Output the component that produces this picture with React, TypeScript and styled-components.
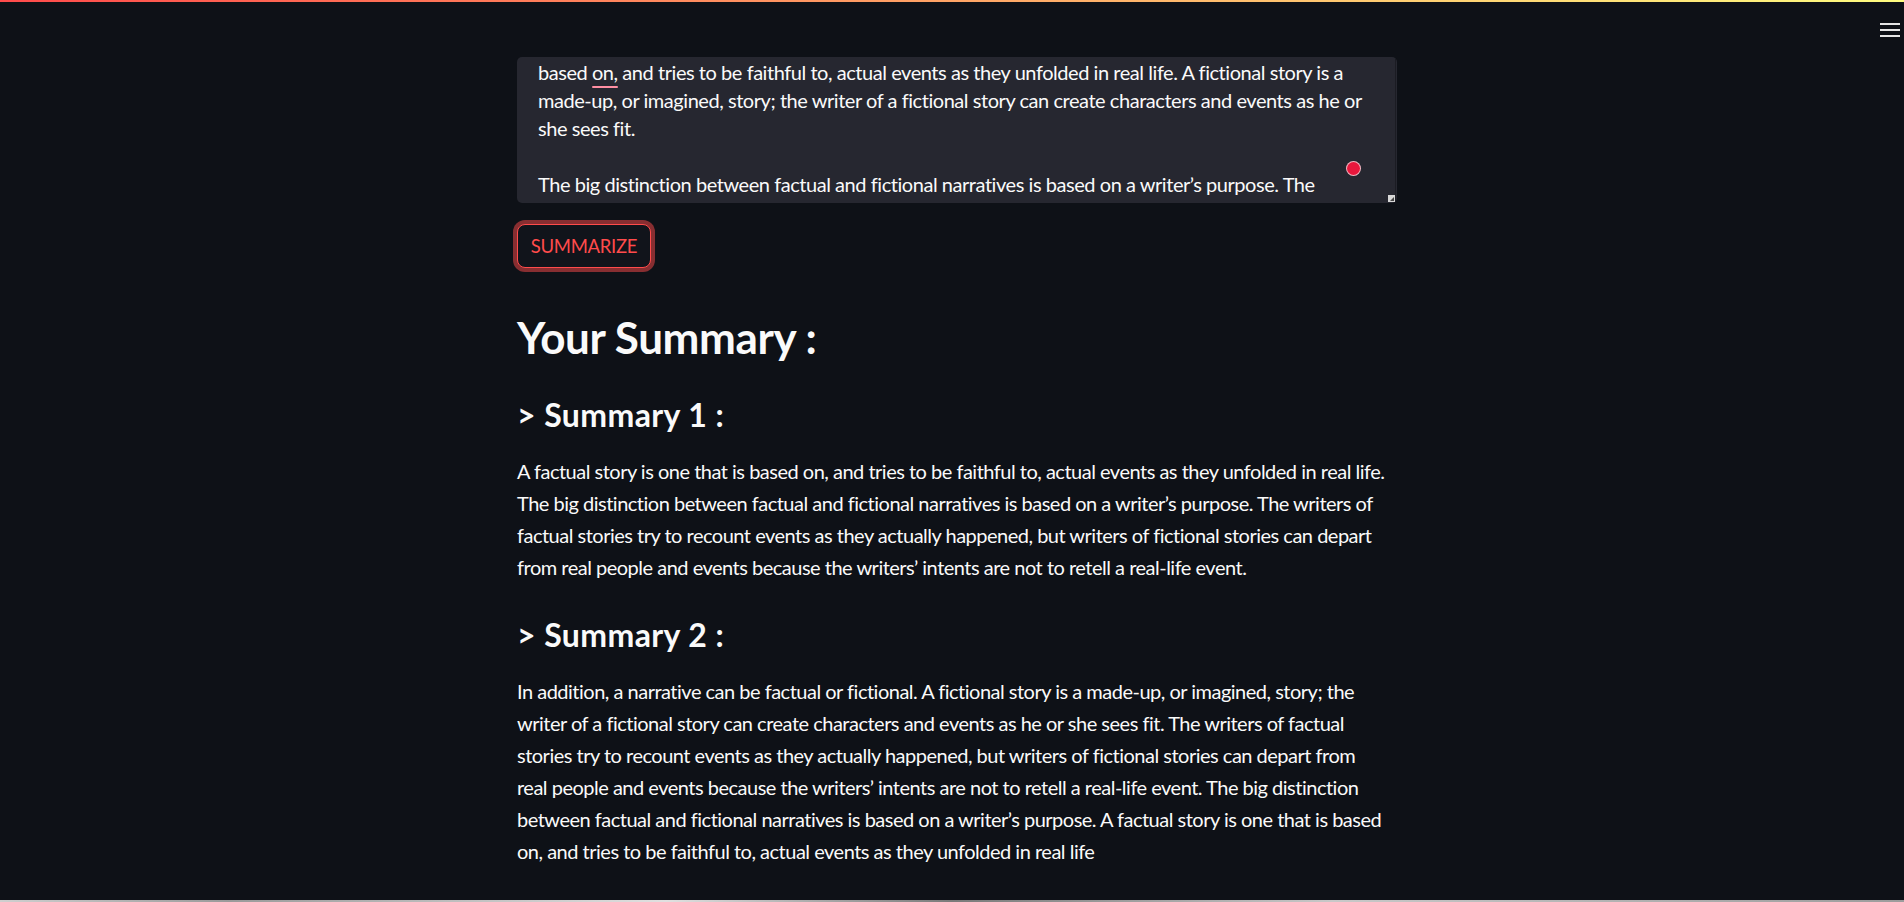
import React from "react";
import styled, { createGlobalStyle } from "styled-components";

const GlobalStyle = createGlobalStyle`
  html, body { margin: 0; padding: 0; background: #0e1117; }
  body { font-family: Lato, "Open Sans", sans-serif; color: #fafafa; overflow: hidden; }
  * { box-sizing: border-box; }
`;

const Page = styled.div`
  position: relative;
  width: 1904px;
  height: 902px;
  overflow: hidden;
  background: #0e1117;
`;

const Decoration = styled.div`
  height: 2px;
  background: linear-gradient(90deg, #ff4b4b, #fffd80);
`;

const Menu = styled.button`
  position: absolute;
  top: 23px;
  right: 4px;
  width: 20px;
  height: 14px;
  padding: 0;
  border: 0;
  background: transparent;
  display: flex;
  flex-direction: column;
  justify-content: space-between;
  span {
    display: block;
    height: 2px;
    background: #e6e6e6;
  }
`;

const Main = styled.main`
  width: 880px;
  margin-left: calc(50% - 435px);
  padding-top: 55px;
  display: flex;
  flex-direction: column;
  align-items: flex-start;
`;

const TextArea = styled.div`
  position: relative;
  width: 880px;
  height: 146px;
  background: #262730;
  border-radius: 5px;
  padding: 1px 21px 0;
  overflow: hidden;
  font-size: 20px;
  line-height: 28px;
  letter-spacing: -0.45px;
  &::after {
    content: "";
    position: absolute;
    top: 0;
    right: 1px;
    width: 1px;
    height: 100%;
    background: #1b1c23;
  }
`;

const Line = styled.div`
  white-space: pre;
  height: 28px;
`;

const Squiggle = styled.span`
  position: relative;
  &::after {
    content: "";
    position: absolute;
    left: 0;
    right: 0;
    bottom: -4px;
    height: 2px;
    border-radius: 1px;
    background: #ff8fa3;
  }
`;

const Dot = styled.span`
  position: absolute;
  left: 830px;
  top: 105px;
  width: 13px;
  height: 13px;
  border-radius: 50%;
  background: #e8173c;
  box-shadow: 0 0 0 1px #f3b7c2;
`;

const Grip = styled.span`
  position: absolute;
  right: 2px;
  bottom: 1px;
  width: 7px;
  height: 7px;
  background: #d8d8d8;
  &::after {
    content: "";
    position: absolute;
    right: 1px;
    bottom: 1px;
    border-left: 4px solid transparent;
    border-bottom: 4px solid #444;
  }
`;

const Button = styled.button`
  margin-top: 21px;
  width: 134px;
  height: 44px;
  border: 1px solid #ff4b4b;
  border-radius: 8px;
  background: #11141b;
  color: #ff4b4b;
  font-family: inherit;
  font-size: 18.5px;
  letter-spacing: -0.3px;
  box-shadow: 0 0 0 4px rgba(255, 75, 75, 0.5);
  padding: 0;
`;

const H2 = styled.h2`
  margin: 42px 0 0;
  font-size: 44px;
  line-height: 54px;
  font-weight: 700;
  letter-spacing: -0.4px;
`;

const H3 = styled.h3<{ $gap: number }>`
  margin: ${(p) => p.$gap}px 0 0;
  font-size: 32px;
  line-height: 36px;
  font-weight: 700;
  letter-spacing: 0.4px;
`;

const Para = styled.p`
  margin: 22px 0 0;
  font-size: 20px;
  line-height: 32px;
  letter-spacing: -0.5px;
  span { display: block; white-space: pre; }
`;

const BottomStrip = styled.div`
  position: absolute;
  left: 0;
  right: 0;
  bottom: 0;
  height: 2px;
  background: linear-gradient(90deg, #cfcfcf, #9a9a9a 12%, #e0e0e0 35%, #7a7a7a 50%, #c8c8c8 70%, #9c9c9c 100%);
`;

const p1 = [
  "A factual story is one that is based on, and tries to be faithful to, actual events as they unfolded in real life.",
  "The big distinction between factual and fictional narratives is based on a writer’s purpose. The writers of",
  "factual stories try to recount events as they actually happened, but writers of fictional stories can depart",
  "from real people and events because the writers’ intents are not to retell a real-life event.",
];

const p2 = [
  "In addition, a narrative can be factual or fictional. A fictional story is a made-up, or imagined, story; the",
  "writer of a fictional story can create characters and events as he or she sees fit. The writers of factual",
  "stories try to recount events as they actually happened, but writers of fictional stories can depart from",
  "real people and events because the writers’ intents are not to retell a real-life event. The big distinction",
  "between factual and fictional narratives is based on a writer’s purpose. A factual story is one that is based",
  "on, and tries to be faithful to, actual events as they unfolded in real life",
];

export default function App() {
  return (
    <Page>
      <GlobalStyle />
      <Decoration />
      <Menu aria-label="menu">
        <span />
        <span />
        <span />
      </Menu>
      <Main>
        <TextArea>
          <Line>
            {"based "}
            <Squiggle>on,</Squiggle>
            {" and tries to be faithful to, actual events as they unfolded in real life. A fictional story is a"}
          </Line>
          <Line>made-up, or imagined, story; the writer of a fictional story can create characters and events as he or</Line>
          <Line>she sees fit.</Line>
          <Line> </Line>
          <Line>The big distinction between factual and fictional narratives is based on a writer’s purpose. The</Line>
          <Dot />
          <Grip />
        </TextArea>
        <Button>SUMMARIZE</Button>
        <H2>Your Summary :</H2>
        <H3 $gap={33}>&gt; Summary 1 :</H3>
        <Para>
          {p1.map((l) => (
            <span key={l}>{l}</span>
          ))}
        </Para>
        <H3 $gap={34}>&gt; Summary 2 :</H3>
        <Para>
          {p2.map((l) => (
            <span key={l}>{l}</span>
          ))}
        </Para>
      </Main>
      <BottomStrip />
    </Page>
  );
}
